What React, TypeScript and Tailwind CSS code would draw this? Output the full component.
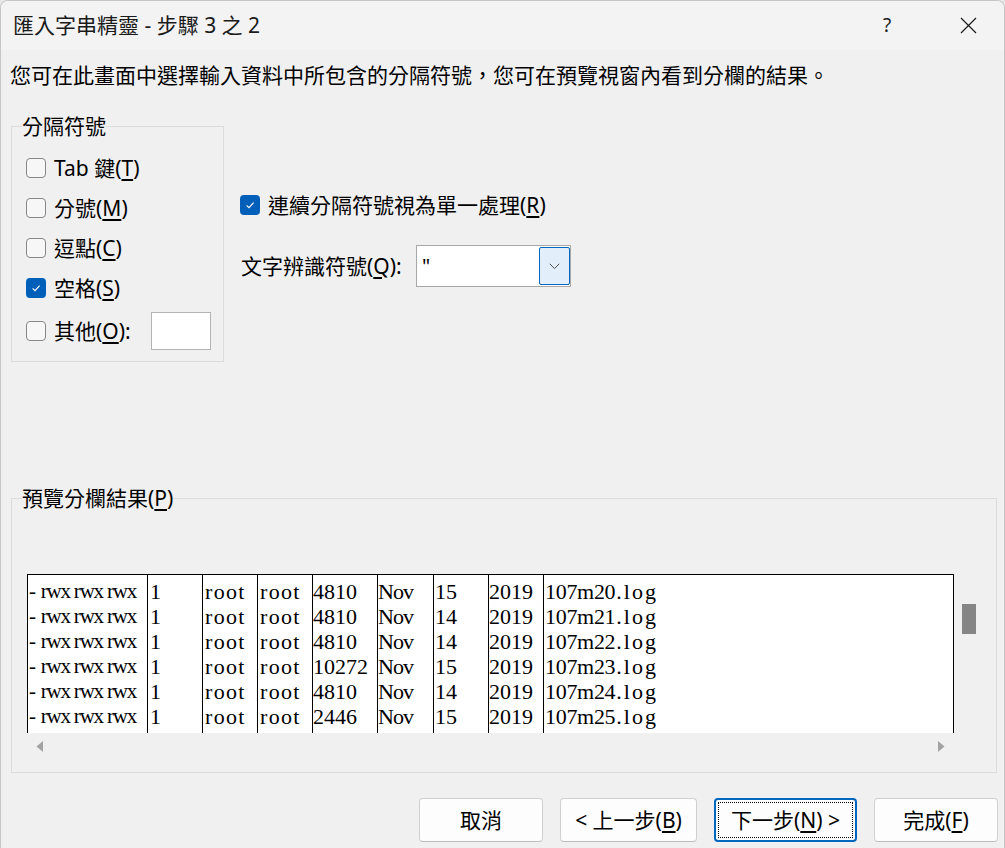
import React from "react";

const UI = "font-['Segoe_UI','Noto_Sans','Noto_Sans_CJK_TC',sans-serif]";

function Box({ checked }: { checked?: boolean }) {
  if (checked) {
    return (
      <span className="w-[20px] h-[20px] rounded-[4px] bg-[#005fb8] flex items-center justify-center shrink-0">
        <svg width="12" height="12" viewBox="0 0 12 12">
          <path d="M2.6 6.3 L5 8.6 L9.6 3.6" fill="none" stroke="white" strokeWidth="1.1" />
        </svg>
      </span>
    );
  }
  return <span className="w-[20px] h-[20px] rounded-[4px] border border-[#878787] bg-[#f7f7f7] shrink-0" />;
}

const rows = [
  ["1", "root", "root", "4810", "Nov", "15", "2019", "107m20", ".log"],
  ["1", "root", "root", "4810", "Nov", "14", "2019", "107m21", ".log"],
  ["1", "root", "root", "4810", "Nov", "14", "2019", "107m22", ".log"],
  ["1", "root", "root", "10272", "Nov", "15", "2019", "107m23", ".log"],
  ["1", "root", "root", "4810", "Nov", "14", "2019", "107m24", ".log"],
  ["1", "root", "root", "2446", "Nov", "15", "2019", "107m25", ".log"],
];

const colClasses = [
  "w-[55px] shrink-0 border-l border-black pl-[2px]",
  "w-[55px] shrink-0 border-l border-black pl-[2px] tracking-[1.3px]",
  "w-[55px] shrink-0 border-l border-black pl-[2px] tracking-[1.3px]",
  "w-[65px] shrink-0 border-l border-black pl-[0px]",
  "w-[56px] shrink-0 border-l border-black pl-[0px] tracking-[-1px]",
  "w-[55px] shrink-0 border-l border-black pl-[1px]",
  "w-[55px] shrink-0 border-l border-black pl-[0px]",
];

function Btn({ children, focused, w }: { children: React.ReactNode; focused?: boolean; w: string }) {
  return (
    <div
      className={
        "relative h-[44px] rounded-[4px] bg-[#fdfdfd] flex items-center justify-center text-[21px] leading-none text-black " +
        w +
        (focused ? " border-2 border-[#0067c0]" : " border border-[#d0d0d0] border-b-[#bdbdbd]")
      }
    >
      {focused && <span className="absolute inset-[2px] border border-dotted border-black" />}
      <span className="relative">{children}</span>
    </div>
  );
}

export default function App() {
  return (
    <div className={"w-[1005px] h-[848px] bg-[#e8e8e8] " + UI}>
      <div className="w-full h-full rounded-t-[8px] border-t border-x border-[#c6c6c6] bg-[#f0f0f0] overflow-hidden flex flex-col text-black">
        {/* Title bar */}
        <div className="h-[49px] shrink-0 bg-[#f3f3f3] flex items-center pl-[12px]">
          <span className="text-[21px] leading-none text-[#1a1a1a]">匯入字串精靈 - 步驟 3 之 2</span>
          <div className="ml-auto flex items-center h-full">
            <div className="w-[90px] flex justify-center text-[19px] leading-none text-[#1a1a1a]">?</div>
            <div className="w-[72px] flex justify-center">
              <svg width="17" height="17" viewBox="0 0 17 17">
                <path d="M1 1 L16 16 M16 1 L1 16" stroke="#1a1a1a" strokeWidth="1.2" />
              </svg>
            </div>
          </div>
        </div>

        {/* Description */}
        <div className="mt-[10px] pl-[9px] text-[21px] leading-[31px]">
          您可在此畫面中選擇輸入資料中所包含的分隔符號，您可在預覽視窗內看到分欄的結果。
        </div>

        {/* Options */}
        <div className="mt-[35px] pl-[10px] flex">
          <div className="relative w-[213px] h-[236px] border border-[#dcdcdc] pt-[21px] pl-[14px] pr-[12px]">
            <span className="absolute left-[10px] top-[-15px] text-[21px] leading-[28px] bg-[#f0f0f0]">分隔符號</span>
            <div className="h-[40px] flex items-center gap-[8px] text-[21px] leading-none">
              <Box />
              <span>
                Tab 鍵(<u className="underline-offset-[3px]">T</u>)
              </span>
            </div>
            <div className="h-[40px] flex items-center gap-[8px] text-[21px] leading-none">
              <Box />
              <span>
                分號(<u className="underline-offset-[3px]">M</u>)
              </span>
            </div>
            <div className="h-[40px] flex items-center gap-[8px] text-[21px] leading-none">
              <Box />
              <span>
                逗點(<u className="underline-offset-[3px]">C</u>)
              </span>
            </div>
            <div className="h-[40px] flex items-center gap-[8px] text-[21px] leading-none">
              <Box checked />
              <span>
                空格(<u className="underline-offset-[3px]">S</u>)
              </span>
            </div>
            <div className="mt-[4px] h-[38px] flex items-center gap-[8px] text-[21px] leading-none">
              <Box />
              <span>
                其他(<u className="underline-offset-[3px]">O</u>):
              </span>
              <span className="ml-auto w-[60px] h-[38px] bg-white border border-[#b4b4b4]" />
            </div>
          </div>

          <div className="ml-[16px] pt-[69px] flex flex-col">
            <div className="h-[20px] flex items-center gap-[8px] text-[21px] leading-none">
              <Box checked />
              <span>
                連續分隔符號視為單一處理(<u className="underline-offset-[3px]">R</u>)
              </span>
            </div>
            <div className="mt-[30px] h-[42px] flex items-center">
              <span className="w-[176px] pl-[1px] text-[21px] leading-none">
                文字辨識符號(<u className="underline-offset-[3px]">Q</u>):
              </span>
              <div className="w-[155px] h-[42px] border border-[#a8a8a8] bg-white flex items-center">
                <span className="pl-[5px] text-[20px] leading-none">"</span>
                <div className="ml-auto w-[31px] h-[38px] rounded-[2px] border border-[#0067c0] bg-[#e2eefa] flex items-center justify-center">
                  <svg width="11" height="7" viewBox="0 0 11 7">
                    <path d="M0.8 0.8 L5.5 5.6 L10.2 0.8" fill="none" stroke="#505050" strokeWidth="1" />
                  </svg>
                </div>
              </div>
            </div>
          </div>
        </div>

        {/* Preview */}
        <div className="mt-[136px] pl-[10px]">
          <div className="relative w-[986px] h-[275px] border border-[#dcdcdc] pt-[75px] pl-[15px]">
            <span className="absolute left-[10px] top-[-15px] text-[21px] leading-[28px] bg-[#f0f0f0]">
              預覽分欄結果(<u className="underline-offset-[3px]">P</u>)
            </span>
            <div className="flex">
              <div className="w-[927px] h-[159px] bg-white border-t border-x border-black flex overflow-hidden font-['Liberation_Serif',serif] text-[22px] text-black">
                <div className="w-[119px] shrink-0 pl-[1px] pt-[4px] whitespace-nowrap overflow-hidden">
                  {rows.map((_, ri) => (
                    <div key={ri} className="h-[25px] flex items-center leading-none text-[21px] tracking-[-1.2px]">
                      <span>-</span>
                      <span className="ml-[6px]">rwx</span>
                      <span className="ml-[4px]">rwx</span>
                      <span className="ml-[4px]">rwx</span>
                    </div>
                  ))}
                </div>
                {colClasses.map((cls, ci) => (
                  <div key={ci} className={cls + " pt-[4px] whitespace-nowrap overflow-hidden"}>
                    {rows.map((r, ri) => (
                      <div key={ri} className="h-[25px] flex items-center leading-none">
                        {r[ci]}
                      </div>
                    ))}
                  </div>
                ))}
                <div className="flex-1 border-l border-black pl-[1px] pt-[4px] whitespace-nowrap overflow-hidden">
                  {rows.map((r, ri) => (
                    <div key={ri} className="h-[25px] flex items-center leading-none">
                      <span className="tracking-[-0.3px]">{r[7]}</span>
                      <span className="tracking-[2px] ml-[1px]">{r[8]}</span>
                    </div>
                  ))}
                </div>
              </div>
              <div className="ml-[8px] mt-[30px] w-[14px] h-[30px] bg-[#858585]" />
            </div>
            <div className="h-[27px] w-[927px] flex items-center px-[9px]">
              <svg width="8" height="11" viewBox="0 0 8 11">
                <path d="M7 0 L7 11 L0.5 5.5 Z" fill="#a3a3a3" />
              </svg>
              <svg className="ml-auto" width="8" height="11" viewBox="0 0 8 11">
                <path d="M1 0 L1 11 L7.5 5.5 Z" fill="#a3a3a3" />
              </svg>
            </div>
          </div>
        </div>

        {/* Buttons */}
        <div className="mt-[25px] pr-[6px] flex justify-end gap-[17px]">
          <Btn w="w-[124px]">取消</Btn>
          <Btn w="w-[137px]">
            &lt; 上一步(<u className="underline-offset-[3px]">B</u>)
          </Btn>
          <Btn w="w-[143px]" focused>
            下一步(<u className="underline-offset-[3px]">N</u>) &gt;
          </Btn>
          <Btn w="w-[124px]">
            完成(<u className="underline-offset-[3px]">F</u>)
          </Btn>
        </div>
      </div>
    </div>
  );
}
